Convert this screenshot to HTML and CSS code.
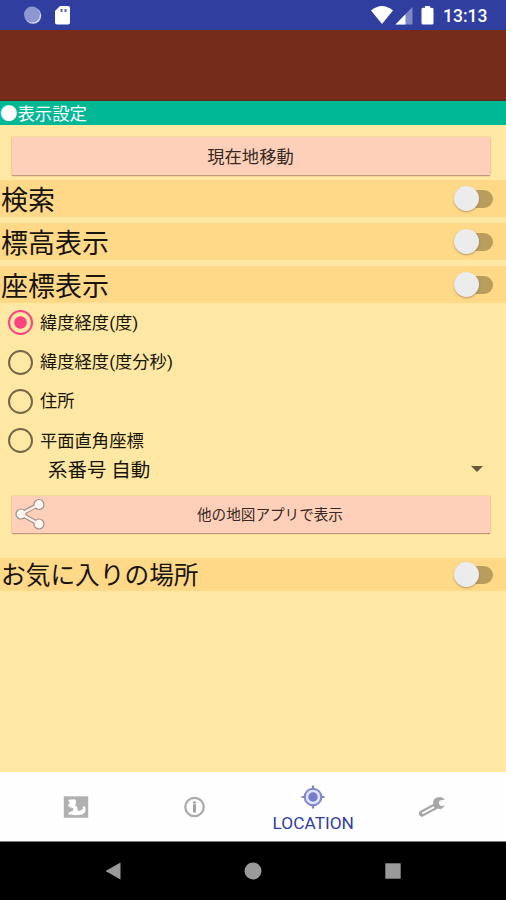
FILE: index.html
```html
<!DOCTYPE html>
<html lang="ja">
<head>
<meta charset="utf-8">
<title>表示設定</title>
<link rel="stylesheet" href="styles.css">
</head>
<body>
<header class="status">
  <svg class="status-left" width="80" height="30" viewBox="0 0 80 30">
    <circle cx="33" cy="15.600" r="8.200" fill="#d9def8"/>
    <circle cx="32" cy="14.600" r="8" fill="#8f97d3"/>
    <path d="M60 6h8q2 0 2 2v14.500q0 2-2 2H57q-2 0-2-2V11z" fill="#fff"/>
    <path d="M60.500 9h2v3h-2zM64.500 9h2v3h-2z" fill="#5c67b8"/>
  </svg>
  <div class="status-right">
    <svg width="66" height="30" viewBox="0 0 66 30">
      <path d="M1 10.500Q12 1.500 23 10.500L12 24z" fill="#fff"/>
      <path d="M42.500 7v17.500H25.500z" fill="#7f89ca"/>
      <path d="M35.500 14.300v10.200h-10z" fill="#fff"/>
      <path d="M55 6h5v1.700h2q1.500 0 1.500 1.500v13.800q0 1.500-1.500 1.500h-9q-1.500 0-1.500-1.500V9.200q0-1.500 1.500-1.500h2z" fill="#fff"/>
    </svg>
    <span class="clock">13:13</span>
  </div>
</header>
<div class="banner"></div>
<h1 class="title">●表示設定</h1>
<main class="settings">
  <button class="btn btn-move">現在地移動</button>
  <div class="row"><span>検索</span><span class="switch"></span></div>
  <div class="row"><span>標高表示</span><span class="switch"></span></div>
  <div class="row"><span>座標表示</span><span class="switch"></span></div>
  <div class="radios">
    <div class="radio"><span class="ring on"></span>緯度経度(度)</div>
    <div class="radio"><span class="ring"></span>緯度経度(度分秒)</div>
    <div class="radio"><span class="ring"></span>住所</div>
    <div class="radio"><span class="ring"></span>平面直角座標</div>
  </div>
  <div class="spinner"><span>系番号 自動</span><i class="caret"></i></div>
  <button class="btn btn-share">
    <svg class="share" width="34" height="36" viewBox="0 0 34 36">
      <g stroke="#a18e88" stroke-width="4.600" fill="none"><path d="M27 8L9 18l18 10"/></g>
      <g fill="#fff8f4" stroke="#a18e88" stroke-width="1.200"><circle cx="27" cy="8.500" r="5"/><circle cx="9" cy="18" r="5"/><circle cx="27" cy="28" r="5"/></g>
      <path d="M27 8.500L9 18l18 10" stroke="#fff0e9" stroke-width="2.400" fill="none"/>
    </svg>
    <span>他の地図アプリで表示</span>
  </button>
  <div class="row row-fav"><span>お気に入りの場所</span><span class="switch"></span></div>
</main>
<nav class="tabs">
  <div class="tab">
    <svg width="26" height="24" viewBox="0 0 26 24">
      <path d="M.800 1.300h24.400v21.500H.800z" fill="#b0b0b0"/>
      <path d="M5 4.800l7-.600 1.300 2.600-1.100 3.300 2.500 2.600-.500 2.500 2.500.600 3.200-1.500-.3-2.400 1.900-1 1.100 2.500-.4 3.500-2.900 2.700-5.300.600-8.800-.7.500-2 4.300-1.800.4-2.500-4.200-1.200-1.500-2.300 2-.8-.500-2z" fill="#fff"/>
    </svg>
  </div>
  <div class="tab">
    <svg width="24" height="24" viewBox="0 0 24 24">
      <circle cx="11.500" cy="12" r="9.200" fill="none" stroke="#ababab" stroke-width="2.300"/>
      <path d="M10 6.500h3v2h-3zM10 9.200h3v8.300h-3z" fill="#a2a2a2"/>
    </svg>
  </div>
  <div class="tab active">
    <svg width="24" height="24" viewBox="0 0 24 24">
      <circle cx="12" cy="12" r="8.300" fill="#e0e4fa" stroke="#8088d0" stroke-width="2"/>
      <circle cx="12" cy="12" r="4.700" fill="#747dcc"/>
      <path d="M12 .500v4M12 19.500v4M.500 12h4M19.500 12h4" stroke="#7c85cf" stroke-width="2.200"/>
    </svg>
    <span>LOCATION</span>
  </div>
  <div class="tab">
    <svg width="28" height="24" viewBox="0 0 28 24">
      <path d="M4 18.500L18 11" stroke="#a6a6a6" stroke-width="6.200" stroke-linecap="round"/>
      <path d="M27 4.700l-3.500-2.400q-5-1.200-7.500 2.300-1.800 3.600.2 6.600 2.600 3.400 7.300 2.500l3.500-3-4.300.2-2-2.300.9-3.200z" fill="#a6a6a6"/>
      <path d="M5 18l10.500-5.600" stroke="#fff" stroke-width="1.800" stroke-linecap="round"/>
    </svg>
  </div>
</nav>
<footer class="navbar">
  <svg width="16" height="18" viewBox="0 0 16 18"><path d="M.500 9L15.500 .500v17z" fill="#9a9a9a"/></svg>
  <svg width="18" height="18" viewBox="0 0 18 18"><circle cx="9" cy="9" r="8.500" fill="#9a9a9a"/></svg>
  <svg width="16" height="16" viewBox="0 0 16 16"><path d="M.300 .300h15.400v15.400H.300z" fill="#9a9a9a"/></svg>
</footer>
</body>
</html>
```
FILE: styles.css
```css
* { box-sizing: border-box; }
body {
  margin: 0;
  width: 506px;
  height: 900px;
  overflow: hidden;
  display: flex;
  flex-direction: column;
  background: #ffe8a4;
  color: #17140c;
  font-family: Roboto, "Noto Sans CJK JP", sans-serif;
}
svg { display: block; flex: none; }
.status {
  height: 30px;
  flex: none;
  display: flex;
  justify-content: space-between;
  background: #303f9f;
}
.status-right { display: flex; align-items: center; padding-right: 18px; }
.clock {
  width: 45px;
  margin-left: 7px;
  padding-top: 2px;
  color: #fff;
  font-size: 17.500px;
  font-weight: 500;
  line-height: 30px;
  white-space: nowrap;
}
.banner {
  height: 71px;
  flex: none;
  background: #752c1a;
  border-bottom: 1px solid #5b2c18;
}
.title {
  margin: 0;
  height: 24px;
  flex: none;
  background: #00b796;
  color: #fff;
  font: 400 17.400px/24px "Noto Sans CJK JP", sans-serif;
}
.settings {
  flex: 1;
  padding-top: 12px;
  display: flex;
  flex-direction: column;
}
.btn {
  flex: none;
  margin: 0 16px 0 12px;
  border: 0;
  background: #ffd0b9;
  color: #352923;
  font-family: "Noto Sans CJK JP", sans-serif;
  text-align: center;
  box-shadow: 0 1px 1px #b89d78, 0 0 2px #d9bd8d;
}
.btn-move { height: 38px; margin-bottom: 5px; padding: 0 1px 2px 0; font-size: 17.300px; }
.row {
  flex: none;
  height: 37px;
  margin-bottom: 6px;
  padding: 0 13px 0 1px;
  display: flex;
  align-items: center;
  justify-content: space-between;
  background: #ffd888;
  font-family: "Noto Sans CJK JP", sans-serif;
  font-size: 27px;
  line-height: 37px;
}
.switch {
  position: relative;
  width: 39px;
  height: 26px;
  display: flex;
  align-items: center;
}
.switch::before {
  content: "";
  width: 30px;
  height: 18px;
  margin-left: 9px;
  border-radius: 9px;
  background: #b99d5d;
}
.switch::after {
  content: "";
  position: absolute;
  left: 0;
  top: 0.500px;
  width: 25px;
  height: 25px;
  border-radius: 50%;
  background: #ececec;
  box-shadow: 0 1px 2px #7b66408c;
}
.radios { flex: none; height: 150px; margin-top: -6px; }
.radio {
  height: 39.400px;
  display: flex;
  align-items: center;
  gap: 7px;
  padding-left: 8px;
  font-size: 17.300px;
  line-height: 38px;
}
.ring {
  width: 25px;
  height: 25px;
  border: 2.500px solid #746748;
  border-radius: 50%;
}
.ring.on {
  border-color: #ff4081;
  background: radial-gradient(circle, #ff4081 5.800px, transparent 6.600px);
}
.spinner {
  flex: none;
  height: 31px;
  margin-bottom: 12px;
  padding: 0 23px 0 48px;
  display: flex;
  align-items: center;
  justify-content: space-between;
  font-size: 19.500px;
}
.caret {
  border: 6px solid transparent;
  border-top-color: #655b40;
  border-bottom: 0;
}
.btn-share {
  height: 37px;
  margin-bottom: 25px;
  padding: 0 1px 2px 0;
  display: grid;
  grid-template-columns: 34px 1fr;
  align-items: center;
  font-size: 14.600px;
}
.btn-share span { padding: 0 0 2px 5px; }
.row-fav { height: 33px; margin: 0; font-size: 24.700px; line-height: 33px; }
.row-fav span:first-child { padding-bottom: 2px; line-height: 31px; }
.tabs {
  flex: none;
  height: 70px;
  padding: 0 15px 0 17px;
  display: grid;
  grid-template-columns: repeat(4, 1fr);
  background: #fefefe;
  border-bottom: 1px solid #777;
}
.tab {
  display: flex;
  flex-direction: column;
  align-items: center;
  justify-content: center;
}
.active { justify-content: flex-start; padding-top: 13px; color: #303f9f; }
.active span { margin-top: 4px; font-size: 17.300px; line-height: 20px; }
.navbar {
  flex: none;
  height: 58px;
  display: flex;
  align-items: center;
  justify-content: space-between;
  padding: 0 105px;
  background: #000;
}
```
